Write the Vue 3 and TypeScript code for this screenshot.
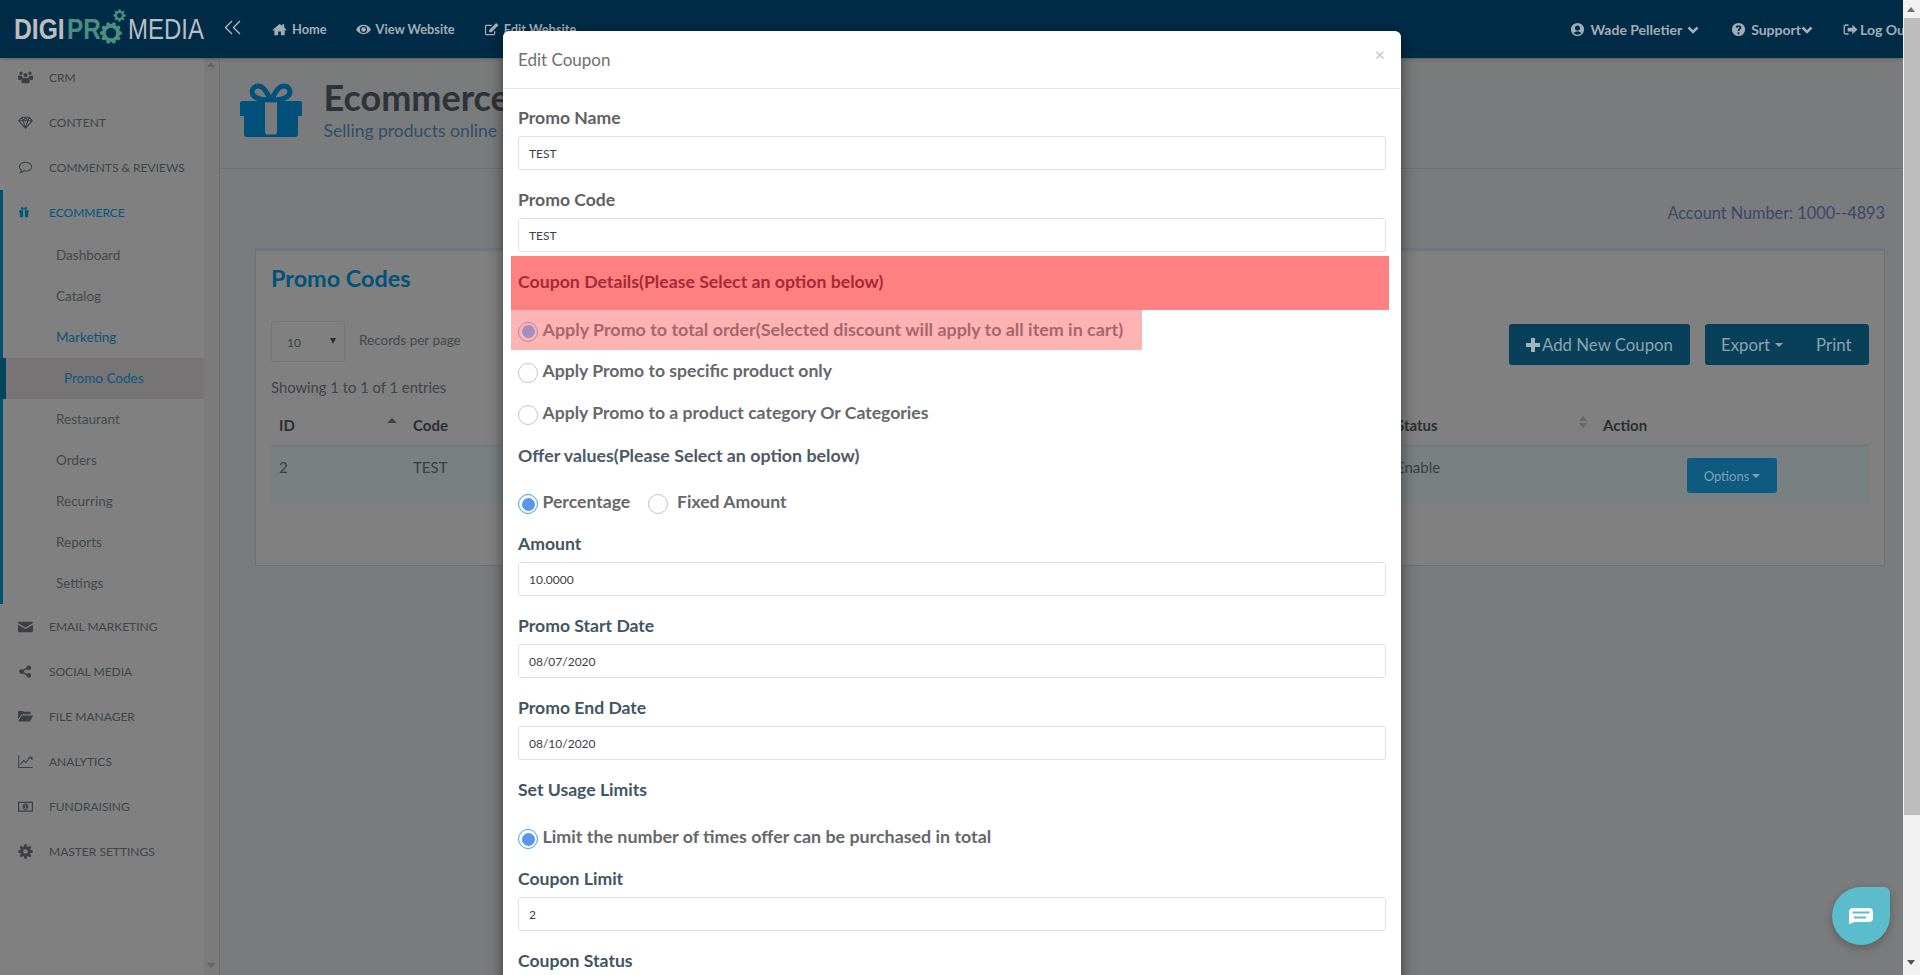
<script setup lang="ts">
const gear = (cx: number, cy: number, ro: number, ri: number, hole: number, n = 8): string => {
  let d = ''
  const step = (Math.PI * 2) / n
  for (let i = 0; i < n; i++) {
    const a = i * step
    const pts: [number, number][] = [
      [ri, a - step * 0.36],
      [ro, a - step * 0.2],
      [ro, a + step * 0.2],
      [ri, a + step * 0.36],
    ]
    pts.forEach(([r, t], k) => {
      d += `${i === 0 && k === 0 ? 'M' : 'L'}${(cx + r * Math.cos(t)).toFixed(2)} ${(cy + r * Math.sin(t)).toFixed(2)}`
    })
  }
  d += `Z M${cx + hole} ${cy}a${hole} ${hole} 0 1 0 ${-2 * hole} 0a${hole} ${hole} 0 1 0 ${2 * hole} 0Z`
  return d
}

interface Ico { d: string; line?: boolean }
const icons: Record<string, Ico> = {
  users: { d: 'M8 3.2a2.2 2.2 0 1 1 0 4.4 2.2 2.2 0 0 1 0-4.4zM3.2 1.6a1.8 1.8 0 1 1 0 3.6 1.8 1.8 0 0 1 0-3.6zM12.8 1.6a1.8 1.8 0 1 1 0 3.6 1.8 1.8 0 0 1 0-3.6zM0 6.2h4.4a3 3 0 0 0 .6 2.2A3.4 3.4 0 0 0 3 10.6H.8C0 10.6 0 10 0 9.5zM16 6.2h-4.4a3 3 0 0 1-.6 2.2 3.4 3.4 0 0 1 2 2.2h2.2c.8 0 .8-.6.8-1.1zM5.6 8.4h4.8c1.4 0 2 1 2 2.4v2c0 .8-.5 1.2-1.2 1.2H4.800c-.7 0-1.200-.4-1.200-1.200v-2c0-1.400.6-2.400 2-2.400z' },
  diamond: { d: 'M4 2.500h8l3.300 3.600L8 14 .7 6.100zM.7 6.100h14.600M5.500 6.100 8 14l2.500-7.900M4 2.500l1.500 3.600L8 2.500l2.500 3.600L12 2.500', line: true },
  comment: { d: 'M8 2.500c3.800 0 6.500 2 6.500 4.600S11.800 11.700 8 11.700c-.7 0-1.300 0-1.900-.2-.9.9-2.100 1.500-3.600 1.800.7-.8 1.100-1.600 1.200-2.500C2.300 10 1.500 8.700 1.500 7.100c0-2.600 2.700-4.600 6.500-4.600z', line: true },
  gift: { d: 'M1.500 5.500h13v3h-1v6.500h-11V8.500h-1zM6.800 5.500v9.500h2.400V5.500zM5 1.500c1.500-.8 2.500.8 3 3.500-2.500 0-4.500-.5-4.300-2 .1-.7.7-1.200 1.300-1.500zM11 1.500c-1.500-.8-2.500.8-3 3.500 2.500 0 4.500-.5 4.300-2-.1-.7-.7-1.200-1.300-1.500z' },
  mail: { d: 'M1.500 3h13c.8 0 1.500.6 1.500 1.300L8 9 0 4.300C0 3.600.7 3 1.500 3zM0 6l8 4.700L16 6v6.500c0 .8-.7 1.500-1.500 1.500h-13C.7 14 0 13.300 0 12.500z' },
  share: { d: 'M11.500 1.500a2.500 2.500 0 1 1-1.900 4.100L6.300 7.300a2.500 2.500 0 0 1 0 1.400l3.300 1.700a2.500 2.500 0 1 1-.6 1.500L5.300 10A2.500 2.500 0 1 1 5.300 6L9 4.100a2.500 2.500 0 0 1 2.500-2.600z' },
  folder: { d: 'M0 3.500C0 2.700.6 2 1.400 2h3.200c.6 0 1 .4 1.200 1h6.400c.7 0 1.300.5 1.300 1.300V5.500H4L0 11zM4.600 6.800h10.900c.4 0 .6.400.4.700l-2.800 5.200c-.2.400-.6.600-1 .6H.9c-.4 0-.6-.4-.4-.7l3.100-5.200c.2-.4.600-.6 1-.6z' },
  chart: { d: 'M.7 1.500v12.800h15M2.500 11l3.500-4 2.500 2 4-5.500 2.500 2M12 3.500h3v3', line: true },
  money: { d: 'M0 3h16v10.500H0zM1.300 4.300v7.900h13.400V4.300zM8 4.800c1.700 0 3 1.500 3 3.450s-1.300 3.450-3 3.450-3-1.500-3-3.450 1.300-3.450 3-3.450zM7 6.500v.8h.6v2.400h-.8v.7h2.500v-.7h-.8V6.200h-.7z' },
  cog: { d: gear(8, 8, 7.8, 5.6, 2.500) },
}

interface Item { label: string; icon: string }
const topItems: Item[] = [
  { label: 'CRM', icon: 'users' },
  { label: 'CONTENT', icon: 'diamond' },
  { label: 'COMMENTS & REVIEWS', icon: 'comment' },
]
const subItems = ['Dashboard', 'Catalog', 'Marketing', 'Promo Codes', 'Restaurant', 'Orders', 'Recurring', 'Reports', 'Settings']
const bottomItems: Item[] = [
  { label: 'EMAIL MARKETING', icon: 'mail' },
  { label: 'SOCIAL MEDIA', icon: 'share' },
  { label: 'FILE MANAGER', icon: 'folder' },
  { label: 'ANALYTICS', icon: 'chart' },
  { label: 'FUNDRAISING', icon: 'money' },
  { label: 'MASTER SETTINGS', icon: 'cog' },
]
const logoGear = gear(12, 12, 11.500, 8.500, 4.500)
const bigGear = gear(12, 12, 12, 9.800, 5.600, 10)
</script>

<template>
  <div class="screen">
    <div class="page">
      <header class="topbar">
        <div class="logo">
          <span class="word digi">DIGI</span>
          <span class="word pro">PR<span class="oh">O</span></span>
          <span class="word media">MEDIA</span>
          <svg class="gear-o" viewBox="0 0 24 24"><path :d="bigGear" fill-rule="evenodd" /></svg>
          <svg class="gear-s" viewBox="0 0 24 24"><path :d="logoGear" fill-rule="evenodd" /></svg>
        </div>
        <svg class="collapse" viewBox="0 0 18 16"><path d="M8 1 1.500 7.500 8 14M16 1 9.500 7.500 16 14" /></svg>
        <nav class="nav">
          <a class="nav-link">
            <svg viewBox="0 0 16 16"><path d="M8 2 .5 8.500l.8.9L2.500 8.400V14h4v-4h3v4h4V8.400l1.200 1 .8-.9L13 5.900V2.500h-2v1.600z" /></svg>Home
          </a>
          <a class="nav-link">
            <svg viewBox="0 0 16 16"><path fill-rule="evenodd" d="M8 3c3.500 0 6.300 2.100 8 5-1.700 2.900-4.500 5-8 5s-6.300-2.100-8-5c1.700-2.900 4.500-5 8-5zm0 1.200A3.800 3.800 0 1 0 8 11.800 3.800 3.800 0 0 0 8 4.200zM8 5.500a2.500 2.500 0 1 1 0 5 2.500 2.500 0 0 1 0-5z" /></svg>View Website
          </a>
          <a class="nav-link">
            <svg viewBox="0 0 16 16"><path d="M12 9v3.500c0 .8-.7 1.500-1.500 1.500h-8C1.700 14 1 13.300 1 12.500v-8C1 3.700 1.700 3 2.500 3H9L7.700 4.300H2.300v8.400h8.400v-2.400zM13 1l2.500 2.500L8 11H5.500V8.500z" /></svg>Edit Website
          </a>
        </nav>
        <div class="user">
          <a class="nav-link wade">
            <svg viewBox="0 0 16 16"><path fill-rule="evenodd" d="M8 1a7 7 0 1 1 0 14A7 7 0 0 1 8 1zm0 2.800a2.700 2.700 0 1 0 0 5.400 2.700 2.700 0 0 0 0-5.400zM3.800 11.800a5.600 5.600 0 0 0 8.400 0C11.500 10.500 10 10 8 10s-3.500.5-4.200 1.800z" /></svg>Wade Pelletier
            <svg class="chev" viewBox="0 0 12 8"><path d="M1.500 1.500 6 6l4.500-4.500" /></svg>
          </a>
          <a class="nav-link support">
            <svg viewBox="0 0 16 16"><path fill-rule="evenodd" d="M8 1a7 7 0 1 1 0 14A7 7 0 0 1 8 1zM7 11v2h2v-2zM8 3.500c-1.700 0-2.900.9-3 2.400l1.900.3c.1-.6.500-1 1.100-1s1 .3 1 .8c0 .4-.3.7-.8 1.100-.8.600-1.200 1.100-1.200 2.400h2c0-.7.200-1 .8-1.400.7-.6 1.200-1.200 1.200-2.200 0-1.500-1.300-2.400-3-2.400z" /></svg>Support<svg class="chev tight" viewBox="0 0 12 8"><path d="M1.500 1.500 6 6l4.500-4.500" /></svg>
          </a>
          <a class="nav-link logout">
            <svg viewBox="0 0 16 16"><path d="M6 2.500v1.400H3c-.6 0-1 .4-1 1v6.200c0 .6.400 1 1 1h3v1.400H3c-1.400 0-2.400-1-2.400-2.400V4.900c0-1.400 1-2.400 2.400-2.400zM10 3l5.500 5-5.500 5v-3H5V6h5z" /></svg>Log Out
          </a>
        </div>
      </header>

      <div class="body">
        <aside class="sidebar">
          <ul class="menu">
            <li v-for="it in topItems" :key="it.label" class="top-item">
              <svg class="ico" viewBox="0 0 16 16">
                <path :d="icons[it.icon].d" :class="{ line: icons[it.icon].line }" fill-rule="evenodd" />
              </svg>{{ it.label }}
            </li>
            <li class="group">
              <div class="top-item blue">
                <svg class="ico small" viewBox="0 0 16 16"><path :d="icons.gift.d" fill-rule="evenodd" /></svg>ECOMMERCE
              </div>
              <div
                v-for="s in subItems"
                :key="s"
                class="sub-item"
                :class="{ marketing: s === 'Marketing', active: s === 'Promo Codes' }"
              >{{ s }}</div>
            </li>
            <li v-for="it in bottomItems" :key="it.label" class="top-item">
              <svg class="ico" viewBox="0 0 16 16">
                <path :d="icons[it.icon].d" :class="{ line: icons[it.icon].line }" fill-rule="evenodd" />
              </svg>{{ it.label }}
            </li>
          </ul>
        </aside>
        <div class="side-scroll">
          <i class="tri up"></i>
          <i class="tri down"></i>
        </div>

        <main class="main">
          <section class="hero">
            <svg class="hero-gift" viewBox="0 0 62 54">
              <path class="bow" d="M31 17C26 9 24 3 18 3c-5 0-7 5-5 9 2 3 9 5 18 5zM31 17c5-8 7-14 13-14 5 0 7 5 5 9-2 3-9 5-18 5z" />
              <path fill-rule="evenodd" d="M0 20c0-1 .8-2 2-2h58c1.200 0 2 1 2 2v13h-4v18c0 2-1 3-3 3H7c-2 0-3-1-3-3V33H0zM25 18v31c0 1.500 1 2.500 2 2.500h8c1 0 2-1 2-2.500V18z" />
            </svg>
            <div>
              <h1 class="hero-title">Ecommerce</h1>
              <p class="hero-sub">Selling products online is easy</p>
            </div>
          </section>
          <div class="account">Account Number: 1000--4893</div>

          <section class="card">
            <h2 class="card-title">Promo Codes</h2>
            <div class="toolbar">
              <div class="length">
                <div class="select">10<i class="select-arrow"></i></div>
                <span class="records">Records per page</span>
              </div>
              <div class="actions">
                <button class="btn add">
                  <svg class="plus" viewBox="0 0 14 14"><path d="M5 0h4v5h5v4H9v5H5V9H0V5h5z" /></svg>Add New Coupon
                </button>
                <div class="btn-group">
                  <button class="btn flat">Export<i class="caret"></i></button>
                  <button class="btn flat print">Print</button>
                </div>
              </div>
            </div>
            <div class="showing">Showing 1 to 1 of 1 entries</div>
            <div class="table-row head">
              <div class="cell">ID<i class="sort-up"></i></div>
              <div class="cell">Code</div>
              <div class="cell">Status<i class="sort-both"></i></div>
              <div class="cell">Action</div>
            </div>
            <div class="table-row data">
              <div class="cell">2</div>
              <div class="cell">TEST</div>
              <div class="cell">Enable</div>
              <div class="cell center">
                <button class="btn-options">Options<i class="caret small"></i></button>
              </div>
            </div>
          </section>
        </main>
      </div>

      <div class="modal">
        <div class="modal-head">
          <h4>Edit Coupon</h4>
          <span class="close">×</span>
        </div>
        <div class="modal-body">
          <label class="lbl grey">Promo Name</label>
          <input class="field" value="TEST" readonly />
          <label class="lbl grey">Promo Code</label>
          <input class="field short" value="TEST" readonly />

          <div class="alert-head">Coupon Details(Please Select an option below)</div>
          <div class="alert-row">
            <span class="radio on faded"></span>Apply Promo to total order(Selected discount will apply to all item in cart)
          </div>
          <div class="opt-row"><span class="radio"></span>Apply Promo to specific product only</div>
          <div class="opt-row"><span class="radio"></span>Apply Promo to a product category Or Categories</div>
          <div class="lbl-plain">Offer values(Please Select an option below)</div>
          <div class="choice-row">
            <span class="choice first"><span class="radio on"></span>Percentage</span>
            <span class="choice"><span class="radio wide"></span>Fixed Amount</span>
          </div>
          <label class="lbl">Amount</label>
          <input class="field" value="10.0000" readonly />
          <label class="lbl">Promo Start Date</label>
          <input class="field" value="08/07/2020" readonly />
          <label class="lbl">Promo End Date</label>
          <input class="field" value="08/10/2020" readonly />
          <div class="lbl-usage">Set Usage Limits</div>
          <div class="choice-row">
            <span class="choice limit"><span class="radio on"></span>Limit the number of times offer can be purchased in total</span>
          </div>
          <label class="lbl">Coupon Limit</label>
          <input class="field" value="2" readonly />
          <label class="lbl">Coupon Status</label>
        </div>
      </div>
    </div>

    <div class="page-scroll">
      <i class="tri up light"></i>
      <div class="thumb"></div>
      <i class="tri down light"></i>
    </div>

    <button class="chat" aria-label="Chat">
      <svg viewBox="0 0 24 16"><path fill-rule="evenodd" d="M4 0h16c2.500 0 4 1.500 4 4v6c0 2.500-1.500 4-4 4H6c-1 0-2 .5-3 1.200L0 16V4c0-2.500 1.500-4 4-4zM3.500 3.500v2h17v-2zM5 8.500v2h12v-2z" /></svg>
    </button>
  </div>
</template>

<style>
html, body { margin: 0; height: 100%; overflow: hidden; background: #7a7b7c; }
</style>

<style scoped>
* { box-sizing: border-box; }
.screen {
  position: relative;
  display: flex;
  width: 1920px;
  height: 975px;
  overflow: hidden;
  font-family: Lato, "Open Sans", sans-serif;
  color: #3c4144;
}
.page {
  position: relative;
  width: 1903px;
  height: 975px;
  overflow: hidden;
  background: #7a7b7c;
}
.topbar {
  position: relative;
  z-index: 2;
  display: flex;
  align-items: center;
  height: 58px;
  background: #002b47;
  box-shadow: 0 1px 3px rgba(0, 0, 0, .25);
  color: #a4adb5;
}
.logo {
  position: relative;
  display: flex;
  align-items: center;
  width: 224px;
  height: 58px;
  padding-left: 14px;
  font-family: "Liberation Sans", sans-serif;
  font-size: 29px;
  white-space: nowrap;
  flex: none;
}
.word { display: inline-block; transform-origin: left center; }
.digi { width: 53px; color: #bdbdbd; font-weight: 700; transform: scaleX(.85); }
.pro { width: 61px; color: #4a8e82; font-weight: 700; transform: scaleX(.84); }
.oh { color: transparent; }
.media { color: #b9bec2; font-weight: 400; transform: scaleX(.826); }
.gear-o { position: absolute; left: 100px; top: 22px; width: 22px; height: 22px; fill: #4a8e82; }
.gear-s { position: absolute; left: 113px; top: 9px; width: 13px; height: 13px; fill: #4a8e82; }
.collapse { width: 18px; height: 16px; fill: none; stroke: #b4bcc2; stroke-width: 1.300; margin-top: -2px; flex: none; }
.nav { display: flex; margin-left: 30px; gap: 29px; }
.nav-link {
  display: flex;
  align-items: center;
  font-size: 12.800px;
  font-weight: 700;
  white-space: nowrap;
}
.nav-link > svg:first-child { width: 15px; height: 15px; fill: #a4adb5; margin-right: 5px; flex: none; }
.chev { width: 12px; height: 8px; fill: none; stroke: #a4adb5; stroke-width: 2.600; margin-left: 5px; margin-top: 2px; }
.chev.tight { margin-left: 0; }
.user { display: flex; margin-left: auto; margin-right: -7px; }
.user .nav-link { font-size: 14px; }
.wade { margin-right: 32px; }
.support { margin-right: 30px; }
.logout > svg:first-child { margin-right: 2px; }
.body { display: flex; height: 917px; }
.sidebar {
  width: 204px;
  height: 100%;
  overflow: hidden;
  background: #808080;
  flex: none;
}
.menu { list-style: none; margin: -3.500px 0 0; padding: 0; }
.top-item {
  display: flex;
  align-items: center;
  height: 45px;
  padding-left: 18px;
  font-size: 12px;
  color: #3f4548;
  white-space: nowrap;
}
.ico { width: 15px; height: 15px; margin-right: 16px; fill: #3b4044; flex: none; }
.ico.small { width: 12px; height: 12px; margin-right: 19px; }
.ico .line { fill: none; stroke: #3b4044; stroke-width: 1.100; }
.group { border-left: 3px solid #00506f; }
.group .top-item { padding-left: 15px; }
.blue { color: #00587e; }
.blue .ico { fill: #00587e; }
.sub-item {
  display: flex;
  align-items: center;
  height: 41px;
  padding-left: 53px;
  font-size: 13.500px;
  color: #44494c;
}
.marketing { color: #0a5572; }
.active {
  margin-left: -3px;
  padding-left: 58px;
  border-left: 6px solid #00455f;
  background: #767474;
  color: #0a5a80;
}
.side-scroll {
  position: relative;
  width: 16px;
  flex: none;
  background: #7a7a7a;
  border-right: 1px solid #6c6d6e;
}
.tri { position: absolute; left: 3px; width: 0; height: 0; border-left: 4.500px solid transparent; border-right: 4.500px solid transparent; }
.tri.up { top: 4px; border-bottom: 5px solid #666; }
.tri.down { bottom: 7px; border-top: 5px solid #666; }
.tri.light.up { top: 7px; border-bottom-color: #6f6f6f; left: 4px; }
.tri.light.down { bottom: 10px; border-top-color: #555; left: 4px; }
.main { flex: 1; min-width: 0; }
.hero {
  display: flex;
  height: 111px;
  padding: 17px 0 0 20px;
  border-bottom: 1px solid #6d7074;
}
.hero-gift { width: 62px; height: 54px; margin: 8px 21.500px 0 0; fill: #00507a; flex: none; }
.bow { fill: none; stroke: #00507a; stroke-width: 5; }
.hero-title { margin: 0; font-size: 36px; line-height: 44px; font-weight: 700; color: #2d3338; }
.hero-sub { margin: 0; font-size: 17.500px; line-height: 24px; color: #2f4f6a; white-space: nowrap; }
.account {
  margin-top: 32px;
  padding-right: 18px;
  text-align: right;
  font-size: 16.300px;
  line-height: 24px;
  color: #39486a;
}
.card {
  height: 318px;
  margin: 23px 18px 0 35px;
  padding: 12px 15px 0;
  background: #808080;
  border: 1px solid #6d7175;
  border-top: 3px solid #6c787d;
}
.card-title { margin: 0; font-size: 23.400px; line-height: 30px; font-weight: 700; color: #00527a; }
.toolbar { display: flex; justify-content: space-between; margin-top: 28px; height: 44px; }
.length { display: flex; align-items: flex-start; }
.select {
  display: flex;
  align-items: center;
  justify-content: space-between;
  width: 74px;
  height: 41px;
  padding: 2px 8px 0 15px;
  border: 1px solid #74777a;
  border-radius: 2px;
  font-size: 12px;
  color: #3a3f42;
}
.select-arrow { width: 0; height: 0; margin-top: -4px; border-left: 3.500px solid transparent; border-right: 3.500px solid transparent; border-top: 6px solid #2c2f31; }
.records { margin: 9px 0 0 14px; font-size: 13.500px; line-height: 20px; color: #44494c; }
.actions { display: flex; gap: 15px; margin-top: 3px; }
.btn {
  display: flex;
  align-items: center;
  height: 41px;
  padding: 0 16px;
  border: 0;
  border-radius: 3px;
  background: #083f59;
  color: #8ba3b1;
  font: inherit;
  font-size: 16.800px;
  white-space: nowrap;
}
.btn.add { width: 181px; padding: 0; justify-content: center; }
.plus { width: 14px; height: 14px; margin-right: 2px; fill: #a3b3bc; }
.btn-group { display: flex; width: 164px; background: #083f59; border-radius: 3px; }
.flat { background: none; }
.print { margin-left: 1px; padding-left: 16px; }
.caret { display: inline-block; margin-left: 5px; width: 0; height: 0; border-left: 4px solid transparent; border-right: 4px solid transparent; border-top: 4px solid #8ba3b1; }
.caret.small { margin-left: 3px; border-top-color: #7fa5b8; }
.showing { margin-top: 10px; font-size: 14.800px; line-height: 24px; color: #3f4548; }
.table-row { display: grid; grid-template-columns: 134px 983px 207px 1fr; }
.head { height: 48px; padding-top: 14px; border-bottom: 3px solid #767a7c; font-weight: 700; color: #2b2f32; font-size: 15px; }
.data { height: 57px; background: #788081; color: #3a3f42; font-size: 15px; padding-top: 8px; }
.cell { position: relative; display: flex; justify-content: space-between; padding: 0 8px; line-height: 24px; white-space: nowrap; }
.cell.center { justify-content: center; }
.sort-up { width: 0; height: 0; margin-top: 5px; border-left: 5px solid transparent; border-right: 5px solid transparent; border-bottom: 5px solid #3f4245; }
.sort-both { position: relative; width: 8px; height: 12px; margin-top: 3px; }
.sort-both::before, .sort-both::after { content: ""; position: absolute; left: 0; width: 0; height: 0; border-left: 4px solid transparent; border-right: 4px solid transparent; }
.sort-both::before { top: 0; border-bottom: 5px solid #646668; }
.sort-both::after { bottom: 0; border-top: 5px solid #646668; }
.btn-options {
  display: flex;
  align-items: center;
  justify-content: center;
  width: 90px;
  height: 35px;
  margin-top: 3px;
  border: 0;
  border-radius: 3px;
  background: #0e5a80;
  color: #7ba3b7;
  font: inherit;
  font-size: 13px;
}
.modal {
  position: absolute;
  z-index: 3;
  left: 503px;
  top: 31px;
  width: 898px;
  min-height: 1100px;
  background: #fff;
  border-radius: 6px;
  box-shadow: 0 5px 15px rgba(0, 0, 0, .5);
}
.modal-head {
  position: relative;
  height: 58px;
  padding: 17px 15px 0;
  border-bottom: 1px solid #e5e8ea;
}
.modal-head h4 { margin: 0; font-size: 17px; line-height: 24px; font-weight: 400; color: #6d7072; }
.close { position: absolute; right: 16px; top: 13px; font-size: 18px; line-height: 20px; color: #c4c4c4; }
.modal-body { display: flex; flex-direction: column; padding: 17px 15px 0; }
.lbl, .lbl-plain, .lbl-usage {
  display: block;
  font-size: 17.600px;
  line-height: 24px;
  font-weight: 700;
  color: #425563;
}
.lbl.grey { color: #5f6163; }
.field {
  display: block;
  width: 868px;
  height: 34px;
  margin: 6px 0 18px;
  padding: 0 10px;
  border: 1px solid #dde3e7;
  border-radius: 3px;
  outline: none;
  font: inherit;
  font-size: 12px;
  color: #3c4144;
}
.field.short { margin-bottom: 4px; }
.alert-head {
  display: flex;
  align-items: center;
  width: 878px;
  height: 54px;
  margin-left: -7px;
  padding: 0 0 4px 7px;
  background: #ff8080;
  color: #a52b37;
  font-size: 17.700px;
  font-weight: 700;
}
.alert-row {
  display: flex;
  align-items: center;
  width: 631px;
  height: 40px;
  margin-left: -7px;
  padding: 0 0 2px 7px;
  background: #ffb3b3;
  color: #a5676e;
  font-size: 17.900px;
  font-weight: 700;
  white-space: nowrap;
}
.opt-row {
  display: flex;
  align-items: center;
  height: 42px;
  padding-bottom: 2px;
  color: #65686a;
  font-size: 17.600px;
  font-weight: 700;
}
.lbl-plain { margin-top: 9px; color: #4b5a66; font-size: 17.800px; }
.choice-row { display: flex; margin-top: 21px; height: 26px; margin-bottom: 18px; }
.choice {
  display: flex;
  align-items: center;
  color: #65686a;
  font-size: 17.600px;
  font-weight: 700;
  white-space: nowrap;
}
.choice.first { width: 130px; }
.choice.limit { font-size: 17.850px; }
.radio {
  position: relative;
  display: inline-block;
  width: 20px;
  height: 20px;
  margin: 6px 4.500px 0 0;
  border: 1px solid #c3c5c7;
  border-radius: 50%;
  background: #fff;
  flex: none;
}
.radio.wide { margin-right: 9px; }
.radio.on { border: 1.500px solid #3ea2ee; }
.radio.on::after {
  content: "";
  position: absolute;
  inset: 2.500px;
  border-radius: 50%;
  background: #5a97ec;
}
.radio.faded { margin-top: 5px; background: #ffb3b3; border-color: #a78bc0; }
.radio.faded::after { background: #a48ec0; }
.page-scroll {
  position: relative;
  width: 17px;
  height: 975px;
  background: #f1f1f1;
  flex: none;
}
.thumb { position: absolute; left: 1px; right: 0; top: 18px; height: 797px; background: #bdbdbd; }
.chat {
  position: absolute;
  z-index: 4;
  left: 1832px;
  top: 887px;
  display: flex;
  align-items: center;
  justify-content: center;
  width: 58px;
  height: 58px;
  padding: 0;
  border: 0;
  border-radius: 50% 6px 50% 50%;
  background: #5bbccb;
  box-shadow: 0 3px 8px rgba(0, 0, 0, .25);
}
.chat svg { width: 24px; height: 16px; fill: #fff; }
</style>
